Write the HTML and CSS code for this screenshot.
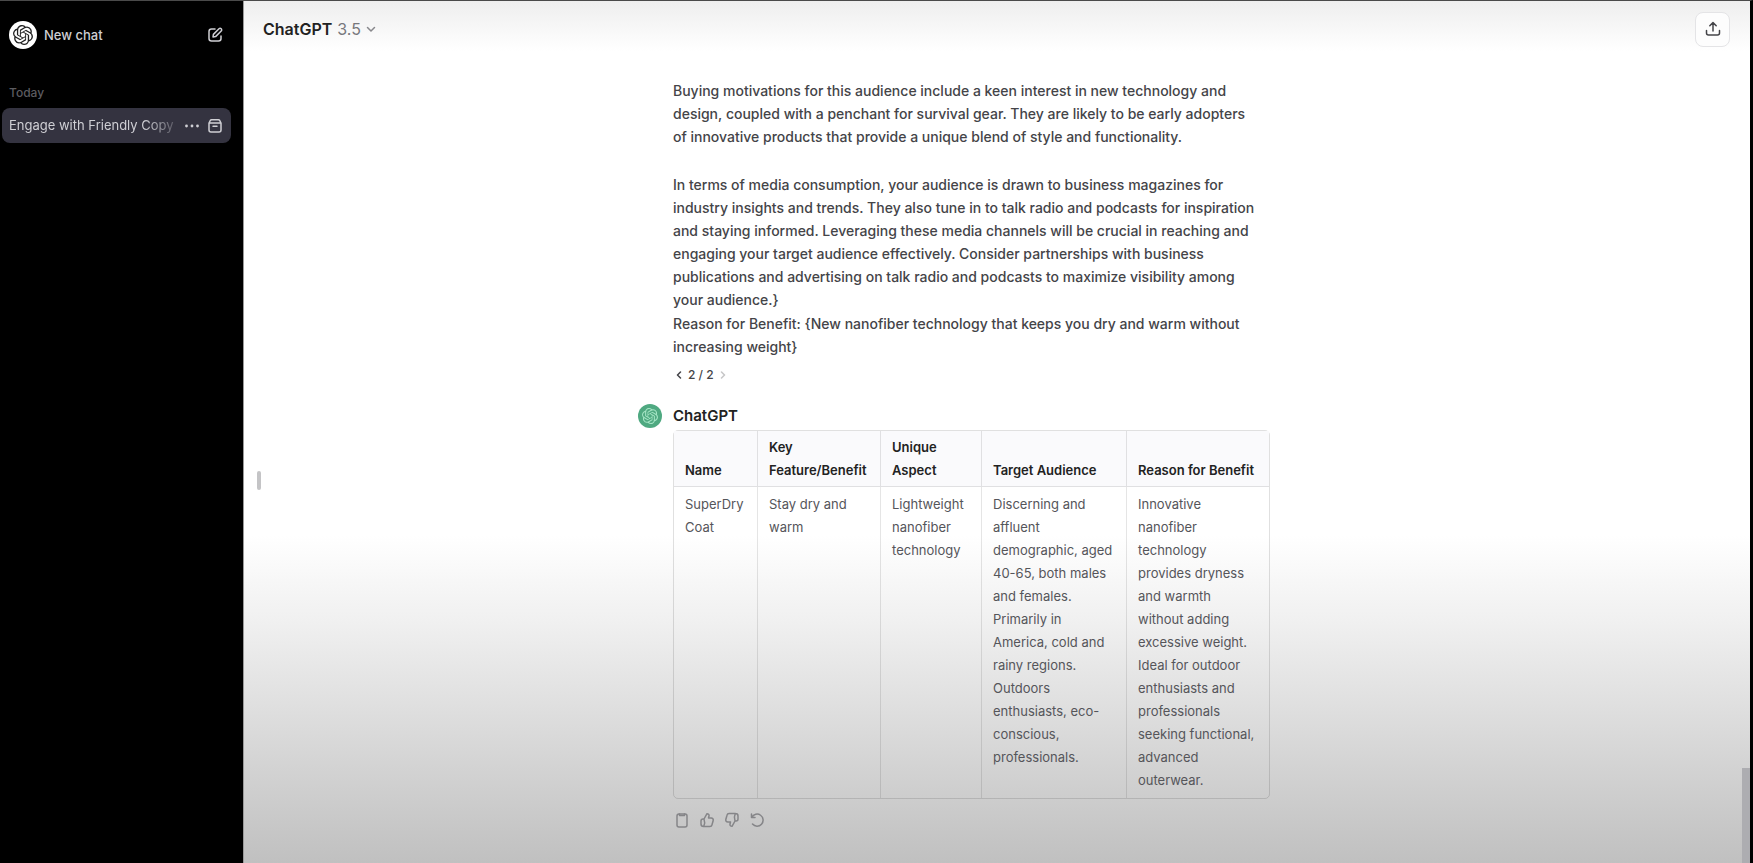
FILE: index.html
```html
<!DOCTYPE html>
<html lang="en">
<head>
  <meta charset="UTF-8">
  <meta name="viewport" content="width=device-width, initial-scale=1">
  <title>ChatGPT</title>
  <link rel="stylesheet" href="styles.css">
</head>
<body>
  <!-- shared logo shape -->
  <svg width="0" height="0" class="defs" aria-hidden="true">
    <symbol id="logo" viewBox="0 0 24 24">
      <path fill="currentColor" d="M22.2819 9.8211a5.9847 5.9847 0 0 0-.5157-4.9108 6.0462 6.0462 0 0 0-6.5098-2.9A6.0651 6.0651 0 0 0 4.9807 4.1818a5.9847 5.9847 0 0 0-3.9977 2.9 6.0462 6.0462 0 0 0 .7427 7.0966 5.98 5.98 0 0 0 .511 4.9107 6.051 6.051 0 0 0 6.5146 2.9001A5.9847 5.9847 0 0 0 13.2599 24a6.0557 6.0557 0 0 0 5.7718-4.2058 5.9894 5.9894 0 0 0 3.9977-2.9001 6.0557 6.0557 0 0 0-.7475-7.0729zm-9.022 12.6081a4.4755 4.4755 0 0 1-2.8764-1.0408l.1419-.0804 4.7783-2.7582a.7948.7948 0 0 0 .3927-.6813v-6.7369l2.02 1.1686a.071.071 0 0 1 .038.052v5.5826a4.504 4.504 0 0 1-4.4945 4.4944zm-9.6607-4.1254a4.4708 4.4708 0 0 1-.5346-3.0137l.142.0852 4.783 2.7582a.7712.7712 0 0 0 .7806 0l5.8428-3.3685v2.3324a.0804.0804 0 0 1-.0332.0615L9.74 19.9502a4.4992 4.4992 0 0 1-6.1408-1.6464zM2.3408 7.8956a4.485 4.485 0 0 1 2.3655-1.9728V11.6a.7664.7664 0 0 0 .3879.6765l5.8144 3.3543-2.0201 1.1685a.0757.0757 0 0 1-.071 0l-4.8303-2.7865A4.504 4.504 0 0 1 2.3408 7.872zm16.5963 3.8558L13.1038 8.364 15.1192 7.2a.0757.0757 0 0 1 .071 0l4.8303 2.7913a4.4944 4.4944 0 0 1-.6765 8.1042v-5.6772a.79.79 0 0 0-.407-.667zm2.0107-3.0231l-.142-.0852-4.7735-2.7818a.7759.7759 0 0 0-.7854 0L9.409 9.2297V6.8974a.0662.0662 0 0 1 .0284-.0615l4.8303-2.7866a4.4992 4.4992 0 0 1 6.6802 4.66zM8.3065 12.863l-2.02-1.1638a.0804.0804 0 0 1-.038-.0567V6.0742a4.4992 4.4992 0 0 1 7.3757-3.4537l-.142.0805L8.704 5.459a.7948.7948 0 0 0-.3927.6813zm1.0976-2.3654l2.602-1.4998 2.6069 1.4998v2.9994l-2.5974 1.4997-2.6067-1.4997Z"/>
    </symbol>
  </svg>

  <div class="app">
    <aside class="sidebar">
      <a href="#" class="new-chat">
        <span class="new-chat-logo"><svg width="20" height="20"><use href="#logo"/></svg></span>
        <span class="new-chat-label">New chat</span>
        <svg class="icon" width="16" height="16" viewBox="0 0 16 16">
          <path d="M8 2H4.5A2.5 2.5 0 0 0 2 4.5v7A2.5 2.5 0 0 0 4.5 14h7a2.5 2.5 0 0 0 2.5-2.5V9"/>
          <path d="M6 10l.4-2.6L12 1.8a1.5 1.5 0 0 1 2.2 2.2L8.6 9.6z"/>
        </svg>
      </a>

      <h3 class="history-title">Today</h3>
      <nav class="history">
        <div class="history-item selected">
          <a href="#" class="history-link">Engage with Friendly Copy</a>
          <button type="button" class="icon-btn" aria-label="More">
            <svg width="16" height="16" viewBox="0 0 16 16" fill="currentColor">
              <circle cx="2.5" cy="8" r="1.4"/><circle cx="8" cy="8" r="1.4"/><circle cx="13.5" cy="8" r="1.4"/>
            </svg>
          </button>
          <button type="button" class="icon-btn" aria-label="Archive">
            <svg class="icon" width="16" height="16" viewBox="0 0 16 16">
              <path d="M2 5l1.3-2.5a1.5 1.5 0 0 1 1.2-.7h7a1.5 1.5 0 0 1 1.2.7L14 5v7a2 2 0 0 1-2 2H4a2 2 0 0 1-2-2zM2 5h12M6 8.3h4"/>
            </svg>
          </button>
        </div>
      </nav>
    </aside>

    <main class="main">
      <header class="topbar">
        <button type="button" class="model-btn">
          ChatGPT <span class="version">3.5</span>
          <svg class="icon chevron" width="10" height="10" viewBox="0 0 10 10"><path d="M1.5 3.5L5 7l3.5-3.5"/></svg>
        </button>
        <button type="button" class="share-btn" aria-label="Share">
          <svg class="icon" width="16" height="16" viewBox="0 0 16 16">
            <path d="M8 10V1.8M4.8 4.8L8 1.6l3.2 3.2M1.5 9.5V12A2 2 0 0 0 3.5 14h9a2 2 0 0 0 2-2V9.5"/>
          </svg>
        </button>
      </header>

      <button type="button" class="sidebar-handle" aria-label="Close sidebar"></button>

      <div class="thread">
        <article class="message">
          <p>Buying motivations for this audience include a keen interest in new technology and design, coupled with a penchant for survival gear. They are likely to be early adopters of innovative products that provide a unique blend of style and functionality.</p>
          <p>In terms of media consumption, your audience is drawn to business magazines for industry insights and trends. They also tune in to talk radio and podcasts for inspiration and staying informed. Leveraging these media channels will be crucial in reaching and engaging your target audience effectively. Consider partnerships with business publications and advertising on talk radio and podcasts to maximize visibility among your audience.}</p>
          <p class="joined">Reason for Benefit: {New nanofiber technology that keeps you dry and warm without increasing weight}</p>
          <div class="pager">
            <button type="button" class="icon-btn" aria-label="Previous">
              <svg class="icon" width="8" height="8" viewBox="0 0 8 8"><path d="M5.5 1l-3 3 3 3"/></svg>
            </button>
            <span>2 / 2</span>
            <button type="button" class="icon-btn" aria-label="Next" disabled>
              <svg class="icon" width="8" height="8" viewBox="0 0 8 8"><path d="M2.5 1l3 3-3 3"/></svg>
            </button>
          </div>
        </article>

        <article class="message">
          <span class="avatar"><svg width="16" height="16"><use href="#logo"/></svg></span>
          <h2 class="author">ChatGPT</h2>
          <table class="answer-table">
            <colgroup>
              <col class="col-name"><col class="col-feature"><col class="col-aspect"><col class="col-audience"><col>
            </colgroup>
            <thead>
              <tr>
                <th>Name</th>
                <th>Key Feature/Benefit</th>
                <th>Unique Aspect</th>
                <th>Target Audience</th>
                <th>Reason for Benefit</th>
              </tr>
            </thead>
            <tbody>
              <tr>
                <td>SuperDry Coat</td>
                <td>Stay dry and warm</td>
                <td>Lightweight nanofiber technology</td>
                <td>Discerning and affluent demographic, aged 40-65, both males and females. Primarily in America, cold and rainy regions. Outdoors enthusiasts, eco-conscious, professionals.</td>
                <td>Innovative nanofiber technology provides dryness and warmth without adding excessive weight. Ideal for outdoor enthusiasts and professionals seeking functional, advanced outerwear.</td>
              </tr>
            </tbody>
          </table>
          <div class="actions">
            <button type="button" class="icon-btn" aria-label="Copy">
              <svg class="icon" width="16" height="16" viewBox="0 0 16 16"><rect x="3" y="2" width="10" height="13" rx="2"/><path d="M5.5 2v1.5h5V2"/></svg>
            </button>
            <button type="button" class="icon-btn" aria-label="Good response">
              <svg class="icon" width="16" height="16" viewBox="0 0 16 16"><path id="thumb" d="M5 7l3-5.3c1.6 0 2.3 1 2 2.3L9.5 6h2.8a2 2 0 0 1 1.9 2.5l-1.2 4.3A2.2 2.2 0 0 1 10.9 14.5H4.5A2.5 2.5 0 0 1 2 12V9a2 2 0 0 1 2-2h1c.6 1.5.6 5.5-.3 7.5"/></svg>
            </button>
            <button type="button" class="icon-btn" aria-label="Bad response">
              <svg class="icon" width="16" height="16" viewBox="0 0 16 16"><use href="#thumb" transform="rotate(180 8 8)"/></svg>
            </button>
            <button type="button" class="icon-btn" aria-label="Regenerate">
              <svg class="icon" width="16" height="16" viewBox="0 0 16 16"><path d="M2.5 2v3.5H6M2.8 5.3A6 6 0 1 1 3.5 12"/></svg>
            </button>
          </div>
        </article>
      </div>
      <span class="scroll-thumb"></span>
    </main>
  </div>
</body>
</html>
```
FILE: styles.css
```css
* {
  box-sizing: border-box;
}
body {
  margin: 0;
  background: #000;
  color: #444448;
  font-family: Inter, "Liberation Sans", sans-serif;
  font-size: 13px;
  line-height: 23px;
}
button {
  padding: 0;
  border: none;
  background: none;
  color: inherit;
  font: inherit;
  cursor: pointer;
}
a {
  color: inherit;
  text-decoration: none;
}
h2, h3, p {
  margin: 0;
}
.defs {
  position: absolute;
}
.icon {
  fill: none;
  stroke: currentColor;
  stroke-width: 1.5;
  stroke-linecap: round;
  stroke-linejoin: round;
}
.icon-btn {
  display: flex;
}
.app {
  display: flex;
  min-height: 100vh;
  border-top: 1px solid #4a4a4a;
  border-right: 3px solid #000;
}

/* sidebar */
.sidebar {
  flex: 0 0 243px;
  min-width: 0;
  padding: 20px 12px 0 2px;
  color: #cfcfd4;
}
.new-chat {
  display: flex;
  align-items: center;
  gap: 7px;
  padding: 0 8px 0 7px;
  font-weight: 500;
}
.new-chat-logo {
  display: flex;
  align-items: center;
  justify-content: center;
  width: 28px;
  height: 28px;
  border-radius: 50%;
  background: #fff;
  color: #222;
}
.new-chat-label {
  flex: 1;
}
.history-title {
  margin: 32px 7px 4px;
  color: #5c5c60;
  font-size: 12px;
  font-weight: 500;
}
.history-item {
  display: flex;
  align-items: center;
  gap: 7px;
  height: 35px;
  padding: 0 8px 0 7px;
  border-radius: 8px;
}
.history-item.selected {
  background: #343340;
}
.history-link {
  flex: 1;
  white-space: nowrap;
  -webkit-mask-image: linear-gradient(to right, #000 80%, rgba(0, 0, 0, 0.2));
  mask-image: linear-gradient(to right, #000 80%, rgba(0, 0, 0, 0.2));
}

/* main area */
.main {
  position: relative;
  flex: 1;
  border-left: 1px solid #999;
  background:
    linear-gradient(to bottom, #eee, rgba(255, 255, 255, 0) 50px),
    linear-gradient(to bottom, #fff 62%, #f0f0f0 72%, #d8d8d8 86%, #c0c0c0);
}
.topbar {
  display: flex;
  align-items: center;
  justify-content: space-between;
  height: 56px;
  padding: 0 20px 0 19px;
}
.model-btn {
  display: flex;
  align-items: center;
  gap: 5px;
  color: #222;
  font-size: 16px;
  font-weight: 600;
}
.version {
  color: #77777c;
  font-weight: 400;
}
.chevron {
  color: #88888c;
}
.share-btn {
  display: flex;
  align-items: center;
  justify-content: center;
  width: 35px;
  height: 35px;
  border: 1px solid #e4e4e6;
  border-radius: 8px;
  background: #fdfdfd;
}
.sidebar-handle {
  position: absolute;
  top: calc(50% + 39px);
  left: 13px;
  width: 4px;
  height: 19px;
  border-radius: 2px;
  background: #c4c4c6;
}
.scroll-thumb {
  position: absolute;
  right: 0;
  bottom: 0;
  width: 8px;
  height: 95px;
  background: #adadb1;
}

/* conversation */
.thread {
  max-width: 718px;
  margin: 0 auto;
  padding: 22px 86px 24px 35px;
}
.message {
  position: relative;
}
.message p {
  padding-right: 10px;
  font-size: 14px;
  font-weight: 500;
}
.message p + p {
  margin-top: 25px;
}
.message p.joined {
  margin-top: 1px;
}
.pager {
  display: flex;
  align-items: center;
  gap: 5px;
  margin: 5px 0 18px 2px;
  font-size: 12px;
  font-weight: 500;
}
.pager .icon-btn:disabled {
  opacity: 0.3;
}
.avatar {
  position: absolute;
  top: 0;
  left: -35px;
  display: flex;
  align-items: center;
  justify-content: center;
  width: 24px;
  height: 24px;
  border-radius: 50%;
  background: #4fa981;
  color: #a5e5c5;
}
.author {
  margin-bottom: 3px;
  color: #222;
  font-size: 15px;
  font-weight: 600;
}
.answer-table {
  width: 100%;
  table-layout: fixed;
  border: 1px solid rgba(0, 0, 0, 0.12);
  border-radius: 5px;
  border-spacing: 0;
}
.answer-table th,
.answer-table td {
  padding: 5px 11px 4px;
  border-left: 1px solid rgba(0, 0, 0, 0.1);
  text-align: left;
}
.answer-table th:first-child,
.answer-table td:first-child {
  border-left: none;
}
.answer-table th {
  border-bottom: 1px solid rgba(0, 0, 0, 0.1);
  background: #fafafc;
  color: #222;
  font-weight: 600;
  vertical-align: bottom;
}
.answer-table td {
  padding: 6px 11px;
  color: #55555a;
  vertical-align: top;
}
.col-name {
  width: 83px;
}
.col-feature {
  width: 123px;
}
.col-aspect {
  width: 101px;
}
.col-audience {
  width: 145px;
}
.actions {
  display: flex;
  gap: 9px;
  margin: 13px 1px 0;
  color: #858588;
}
```
